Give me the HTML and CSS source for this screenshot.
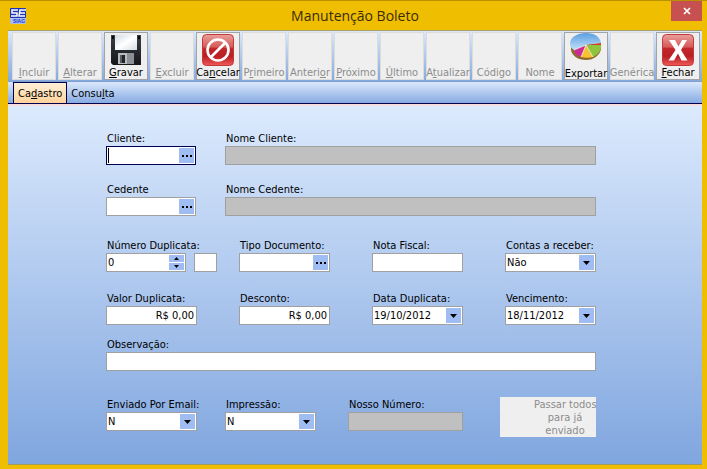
FILE: index.html
```html
<!DOCTYPE html>
<html lang="pt-BR">
<head>
    <meta charset="UTF-8">
    <meta name="viewport" content="width=device-width, initial-scale=1.0">
    <title>Manutenção Boleto</title>
    <link rel="stylesheet" href="styles.css">
</head>
<body>
    <div class="window">
        <header class="titlebar">
            <svg class="logo" viewBox="0 0 20 16" aria-hidden="true">
                <rect x="2" y="0" width="16" height="16" rx="2" fill="#a9bdf0"/>
                <rect x="2" y="0" width="16" height="10" rx="1" fill="#1c35b4"/>
                <path d="M10 2H4v3h5v3H3M18 2h-6l-1 6h6M11 5h6" fill="none" stroke="#fff" stroke-width="1.500"/>
                <text x="11" y="15" text-anchor="middle" font-size="5" font-weight="bold" fill="#1c3fd0">SIAG</text>
            </svg>
            <h1>Manutenção Boleto</h1>
            <button type="button" class="close" aria-label="Fechar janela">
                <svg viewBox="0 0 8 8"><path d="M1 1l6 6M7 1L1 7" fill="none" stroke="#fff" stroke-width="1.700"/></svg>
            </button>
        </header>

        <div class="toolbar">
            <button type="button" disabled><span><u>I</u>ncluir</span></button>
            <button type="button" disabled><span><u>A</u>lterar</span></button>
            <button type="button">
                <svg viewBox="0 0 32 32">
                    <defs>
                        <linearGradient id="disk" x1="0" y1="0" x2="0" y2="1">
                            <stop offset="0" stop-color="#3c3f46"/><stop offset="1" stop-color="#15171b"/>
                        </linearGradient>
                        <linearGradient id="paper" x1="0" y1="0" x2="1" y2="1">
                            <stop offset="0" stop-color="#cfd9e2"/><stop offset=".5" stop-color="#fff"/><stop offset="1" stop-color="#d3dee8"/>
                        </linearGradient>
                    </defs>
                    <path d="M1 1h30v30H3l-2-2z" fill="url(#disk)"/>
                    <path d="M5 1h22v15H5z" fill="url(#paper)"/>
                    <path d="M2 2h2v3H2zM28 2h2v3h-2z" fill="#08090a"/>
                    <path d="M8 19h16v11H8z" fill="#b9bcc0"/>
                    <path d="M17 19h7v11h-7z" fill="#8c8f94"/>
                    <path d="M10 21h5v8h-5z" fill="#222428"/>
                    <path d="M10 21h2v8h-2z" fill="#5a5d62"/>
                </svg>
                <span><u>G</u>ravar</span>
            </button>
            <button type="button" disabled><span><u>E</u>xcluir</span></button>
            <button type="button">
                <svg viewBox="0 0 32 32">
                    <defs>
                        <linearGradient id="red" x1="0" y1="0" x2="0" y2="1">
                            <stop offset="0" stop-color="#e9a09c"/><stop offset=".4" stop-color="#d65b59"/>
                            <stop offset=".45" stop-color="#c3272c"/><stop offset=".7" stop-color="#b81e23"/><stop offset="1" stop-color="#f05a58"/>
                        </linearGradient>
                    </defs>
                    <rect x=".5" y=".5" width="31" height="31" rx="4" fill="url(#red)" stroke="#c2393a"/>
                    <circle cx="16" cy="16" r="10.500" fill="none" stroke="#fff" stroke-width="2.600"/>
                    <path d="M9 23L23 9" stroke="#fff" stroke-width="2.600"/>
                </svg>
                <span>Ca<u>n</u>celar</span>
            </button>
            <button type="button" disabled><span>P<u>r</u>imeiro</span></button>
            <button type="button" disabled><span>Anteri<u>o</u>r</span></button>
            <button type="button" disabled><span><u>P</u>róximo</span></button>
            <button type="button" disabled><span><u>Ú</u>ltimo</span></button>
            <button type="button" disabled><span>A<u>t</u>ualizar</span></button>
            <button type="button" disabled><span>Código</span></button>
            <button type="button" disabled><span>Nome</span></button>
            <button type="button" class="export">
                <svg viewBox="0 0 32 32">
                    <defs>
                        <linearGradient id="sky" x1="0" y1="0" x2="0" y2="1">
                            <stop offset="0" stop-color="#5a9fe0"/><stop offset="1" stop-color="#c2e0fa"/>
                        </linearGradient>
                    </defs>
                    <path d="M1 13v4c1 6 7 10 15 10s14-5 15-11v-5z" fill="#8f6a2a"/>
                    <path d="M0 11C0 4 7 0 16 0s14 4 15 10l-15 2L4 17c-3-2-4-4-4-6z" fill="url(#sky)"/>
                    <path d="M16 12L4 17c1 4 3 6 7 7z" fill="#c92d93"/>
                    <path d="M16 12l-5 12c4 1 8 1 12 0z" fill="#f8c331"/>
                    <path d="M16 12l7 12c6-3 9-8 8-13z" fill="#8fc53e"/>
                    <path d="M16 12l15-2v2z" fill="#d33a2b"/>
                    <path d="M16 12L4 17M16 12l-5 12M16 12l7 12" stroke="#fff" stroke-width=".7"/>
                </svg>
                <span>Exportar</span>
            </button>
            <button type="button" disabled><span>Genérica</span></button>
            <button type="button">
                <svg viewBox="0 0 32 32">
                    <rect x=".5" y=".5" width="31" height="31" rx="4" fill="url(#red)" stroke="#c2393a"/>
                    <path d="M7 6h6l3.500 6.500L20 6h5l-6 10 6.500 10.500h-6L16 19.500l-4 7H6.500L13.500 16z" fill="#fff"/>
                </svg>
                <span><u>F</u>echar</span>
            </button>
        </div>

        <nav class="tabs">
            <a href="#cadastro" class="active">Ca<u>d</u>astro</a>
            <a href="#consulta">Consu<u>l</u>ta</a>
        </nav>

        <form class="panel" id="cadastro">
            <div class="row lookup">
                <div class="field">
                    <label for="cliente">Cliente:</label>
                    <div class="box focused">
                        <input type="text" id="cliente">
                        <button type="button" class="more" aria-label="Buscar cliente"><i></i><i></i><i></i></button>
                    </div>
                </div>
                <div class="field">
                    <label for="nomeCliente">Nome Cliente:</label>
                    <input type="text" class="box" id="nomeCliente" disabled>
                </div>
            </div>

            <div class="row lookup">
                <div class="field">
                    <label for="cedente">Cedente</label>
                    <div class="box">
                        <input type="text" id="cedente">
                        <button type="button" class="more" aria-label="Buscar cedente"><i></i><i></i><i></i></button>
                    </div>
                </div>
                <div class="field">
                    <label for="nomeCedente">Nome Cedente:</label>
                    <input type="text" class="box" id="nomeCedente" disabled>
                </div>
            </div>

            <div class="row quarters document">
                <div class="field">
                    <label for="numero">Número Duplicata:</label>
                    <div class="number">
                        <div class="box">
                            <input type="text" inputmode="numeric" id="numero" value="0">
                            <div class="spin">
                                <button type="button" aria-label="Aumentar"><svg viewBox="0 0 5 3"><path d="M0 3h5L2.500 0z"/></svg></button>
                                <button type="button" aria-label="Diminuir"><svg viewBox="0 0 5 3"><path d="M0 0h5L2.500 3z"/></svg></button>
                            </div>
                        </div>
                        <input type="text" class="box suffix" aria-label="Parcela">
                    </div>
                </div>
                <div class="field">
                    <label for="tipo">Tipo Documento:</label>
                    <div class="box">
                        <input type="text" id="tipo">
                        <button type="button" class="more" aria-label="Buscar tipo"><i></i><i></i><i></i></button>
                    </div>
                </div>
                <div class="field">
                    <label for="nota">Nota Fiscal:</label>
                    <input type="text" class="box" id="nota">
                </div>
                <div class="field">
                    <label for="contas">Contas a receber:</label>
                    <div class="box combo">
                        <select id="contas"><option>Não</option><option>Sim</option></select>
                        <span class="arrow"><svg viewBox="0 0 7 4"><path d="M0 0h7L3.500 4z"/></svg></span>
                    </div>
                </div>
            </div>

            <div class="row quarters values">
                <div class="field">
                    <label for="valor">Valor Duplicata:</label>
                    <input type="text" class="box money" id="valor" value="R$ 0,00">
                </div>
                <div class="field">
                    <label for="desconto">Desconto:</label>
                    <input type="text" class="box money" id="desconto" value="R$ 0,00">
                </div>
                <div class="field">
                    <label for="data">Data Duplicata:</label>
                    <div class="box">
                        <input type="text" id="data" value="19/10/2012">
                        <button type="button" class="arrow" aria-label="Abrir calendário"><svg viewBox="0 0 7 4"><path d="M0 0h7L3.500 4z"/></svg></button>
                    </div>
                </div>
                <div class="field">
                    <label for="vencimento">Vencimento:</label>
                    <div class="box">
                        <input type="text" id="vencimento" value="18/11/2012">
                        <button type="button" class="arrow" aria-label="Abrir calendário"><svg viewBox="0 0 7 4"><path d="M0 0h7L3.500 4z"/></svg></button>
                    </div>
                </div>
            </div>

            <div class="field notes">
                <label for="observacao">Observação:</label>
                <input type="text" class="box" id="observacao">
            </div>

            <div class="row sending">
                <div class="field">
                    <label for="enviado">Enviado Por Email:</label>
                    <div class="box combo">
                        <select id="enviado"><option>N</option><option>S</option></select>
                        <span class="arrow"><svg viewBox="0 0 7 4"><path d="M0 0h7L3.500 4z"/></svg></span>
                    </div>
                </div>
                <div class="field">
                    <label for="impressao">Impressão:</label>
                    <div class="box combo">
                        <select id="impressao"><option>N</option><option>S</option></select>
                        <span class="arrow"><svg viewBox="0 0 7 4"><path d="M0 0h7L3.500 4z"/></svg></span>
                    </div>
                </div>
                <div class="field our-number">
                    <label for="nosso">Nosso Número:</label>
                    <input type="text" class="box" id="nosso" disabled>
                </div>
                <button type="button" class="mark-sent" disabled>Passar todos<br>para já<br>enviado</button>
            </div>
        </form>
    </div>
</body>
</html>
```
FILE: styles.css
```css
* {
    box-sizing: border-box;
}
body {
    margin: 0;
    font-family: "DejaVu Sans Condensed", Tahoma, sans-serif;
    font-size: 11px;
    color: #000;
}
button,
input,
select {
    font: inherit;
    color: inherit;
    margin: 0;
    padding: 0;
    border: 0;
    border-radius: 0;
}
.window {
    min-height: 100vh;
    display: flex;
    flex-direction: column;
    background-color: #f0be00;
    border-top: 1px solid #b99100;
    padding: 0 5px 4px 8px;
}

/* title bar */
.titlebar {
    display: grid;
    grid-template-columns: 48px 1fr 48px;
    align-items: center;
    height: 29px;
}
.logo {
    width: 20px;
    height: 16px;
    font-family: "Liberation Sans", sans-serif;
}
h1 {
    margin: 0;
    text-align: center;
    font-family: "Open Sans", sans-serif;
    font-size: 14px;
    font-weight: normal;
    line-height: 29px;
    color: #3a2c08;
}
.close {
    align-self: start;
    justify-self: end;
    display: flex;
    align-items: center;
    justify-content: center;
    width: 31px;
    height: 20px;
    background-color: #c75050;
}
.close svg {
    width: 8px;
    height: 8px;
}

/* toolbar */
.toolbar {
    display: grid;
    grid-template-columns: repeat(15, 1fr);
    gap: 2px;
    padding: 1px 2px 1px 4px;
    background: linear-gradient(#dbe8fb, #86a9dc);
    border-top: 1px solid #aba05c;
    border-bottom: 1px solid #7f9fd0;
}
.toolbar button {
    display: flex;
    flex-direction: column;
    align-items: center;
    justify-content: flex-end;
    min-width: 0;
    height: 48px;
    background-color: #efefef;
    border: 1px solid #a0a4a8;
    line-height: 13px;
    white-space: nowrap;
}
.toolbar button:disabled {
    color: #8c8c8c;
    border-color: #dcdcdc;
}
.toolbar svg {
    width: 32px;
    height: 32px;
}
.toolbar .export {
    justify-content: space-between;
    line-height: 10px;
}

/* tabs */
.tabs {
    display: flex;
    align-items: flex-end;
    height: 22px;
    padding-left: 5px;
    background: linear-gradient(#dbe8fc, #86abe2);
    border-bottom: 1px solid #000050;
}
.tabs a {
    padding: 2px 4px 0;
    line-height: 18px;
    color: #000;
    text-decoration: none;
}
.tabs .active {
    border: 1px solid #000050;
    border-bottom: 0;
    background: linear-gradient(#fff0d8, #ffd29a);
}

/* form */
.panel {
    flex: 1;
    padding: 25px 106px 26px 98px;
    border-top: 2px solid #f6dcdc;
    border-bottom: 1px solid #a09c60;
    background: linear-gradient(#dceafd, #80a6df);
}
.row {
    margin-bottom: 17px;
}
.lookup {
    display: grid;
    grid-template-columns: 90fr 371fr;
    gap: 29px;
}
.quarters {
    display: grid;
    grid-template-columns: repeat(4, 1fr);
    gap: 42px;
}
.document {
    margin-top: 22px;
    margin-bottom: 19px;
}
.values {
    margin-bottom: 12px;
}
.notes {
    margin-bottom: 26px;
}
.field {
    min-width: 0;
}
label {
    display: block;
    padding-left: 1px;
    line-height: 15px;
    white-space: nowrap;
}
.box {
    display: flex;
    width: 100%;
    height: 19px;
    padding: 1px;
    background-color: #fff;
    border: 1px solid #a0a0a0;
}
.box input,
.box select {
    flex: 1;
    min-width: 0;
    background: none;
    outline: 0;
}
.box:disabled {
    background-color: #c0c0c0;
}
.focused {
    border-color: #000050;
}
/* text cursor of the field being edited */
.focused input {
    border-left: 1px solid #000;
}
.more,
.arrow {
    display: flex;
    align-items: center;
    justify-content: center;
    gap: 2px;
    width: 15px;
    height: 15px;
    background-color: #9fbdf3;
}
.more i {
    width: 2px;
    height: 2px;
    background-color: #000;
}
.arrow svg {
    width: 7px;
    height: 4px;
}
.combo {
    display: grid;
}
.combo select,
.combo .arrow {
    grid-area: 1 / 1;
}
.combo select {
    appearance: none;
}
.combo .arrow {
    justify-self: end;
    pointer-events: none;
}
.money {
    padding-right: 2px;
    text-align: right;
}
.number {
    display: flex;
    gap: 8px;
    margin-right: -20px;
}
.number .box {
    min-width: 0;
}
.number .suffix {
    flex: 0 0 23px;
}
.spin {
    display: flex;
    flex-direction: column;
    gap: 1px;
    width: 15px;
}
.spin button {
    flex: 1;
    display: flex;
    align-items: center;
    justify-content: center;
    background-color: #9fbdf3;
}
.spin svg {
    width: 5px;
    height: 3px;
}
.sending {
    display: grid;
    grid-template-columns: 91fr 91fr 119fr 105fr;
    gap: 28px;
    margin-bottom: 0;
}
.our-number {
    margin-left: 4px;
}
.mark-sent {
    min-width: 0;
    height: 40px;
    margin-left: 9px;
    padding-left: 34px;
    background-color: #efefef;
    color: #8c8c8c;
    line-height: 13px;
    white-space: nowrap;
}
```
